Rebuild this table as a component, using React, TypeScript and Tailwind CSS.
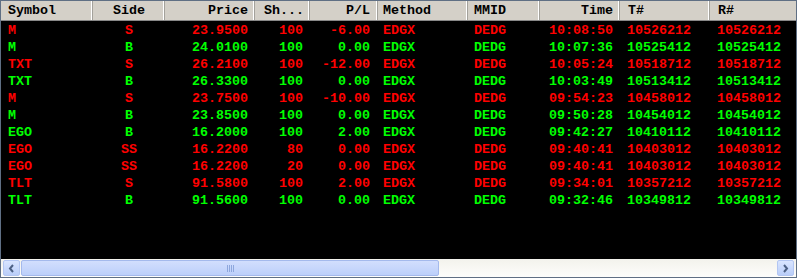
const RED = "text-[#ff0000]";
const GREEN = "text-[#00ff00]";

type Trade = {
  sym: string;
  side: string;
  price: string;
  sh: string;
  pl: string;
  time: string;
  t: string;
  buy: boolean;
};

const trades: Trade[] = [
  { sym: "M", side: "S", price: "23.9500", sh: "100", pl: "-6.00", time: "10:08:50", t: "10526212", buy: false },
  { sym: "M", side: "B", price: "24.0100", sh: "100", pl: "0.00", time: "10:07:36", t: "10525412", buy: true },
  { sym: "TXT", side: "S", price: "26.2100", sh: "100", pl: "-12.00", time: "10:05:24", t: "10518712", buy: false },
  { sym: "TXT", side: "B", price: "26.3300", sh: "100", pl: "0.00", time: "10:03:49", t: "10513412", buy: true },
  { sym: "M", side: "S", price: "23.7500", sh: "100", pl: "-10.00", time: "09:54:23", t: "10458012", buy: false },
  { sym: "M", side: "B", price: "23.8500", sh: "100", pl: "0.00", time: "09:50:28", t: "10454012", buy: true },
  { sym: "EGO", side: "B", price: "16.2000", sh: "100", pl: "2.00", time: "09:42:27", t: "10410112", buy: true },
  { sym: "EGO", side: "SS", price: "16.2200", sh: "80", pl: "0.00", time: "09:40:41", t: "10403012", buy: false },
  { sym: "EGO", side: "SS", price: "16.2200", sh: "20", pl: "0.00", time: "09:40:41", t: "10403012", buy: false },
  { sym: "TLT", side: "S", price: "91.5800", sh: "100", pl: "2.00", time: "09:34:01", t: "10357212", buy: false },
  { sym: "TLT", side: "B", price: "91.5600", sh: "100", pl: "0.00", time: "09:32:46", t: "10349812", buy: true },
];

const cols = "grid grid-cols-[92px_72px_90px_55px_68px_90px_72px_80px_90px_1fr]";
const hcell = "h-full flex items-center shadow-[inset_-1px_0_#a3a19b,inset_-2px_0_#ffffff]";

const Header = () => (
  <div className={`${cols} h-[20px] bg-[#d4d0c8] text-black border-b border-[#888]`}>
    <div className={`${hcell} pl-[7px]`}>Symbol</div>
    <div className={`${hcell} justify-center`}>Side</div>
    <div className={`${hcell} justify-end pr-[7px]`}>Price</div>
    <div className={`${hcell} pl-[9px]`}>Sh...</div>
    <div className={`${hcell} justify-end pr-[8px]`}>P/L</div>
    <div className={`${hcell} pl-[5px]`}>Method</div>
    <div className={`${hcell} pl-[6px]`}>MMID</div>
    <div className={`${hcell} justify-end pr-[7px]`}>Time</div>
    <div className={`${hcell} pl-[8px]`}>T#</div>
    <div className="h-full flex items-center pl-[8px]">R#</div>
  </div>
);

const Row = (tr: Trade) => (
  <div className={`${cols} h-[17px] items-center ${tr.buy ? GREEN : RED}`}>
    <div className="pl-[7px]">{tr.sym}</div>
    <div className="text-center">{tr.side}</div>
    <div className="text-right pr-[7px]">{tr.price}</div>
    <div className="text-right pr-[7px]">{tr.sh}</div>
    <div className="text-right pr-[8px]">{tr.pl}</div>
    <div className="pl-[5px]">EDGX</div>
    <div className="pl-[6px]">DEDG</div>
    <div className="text-right pr-[7px]">{tr.time}</div>
    <div className="pl-[7px]">{tr.t}</div>
    <div className="pl-[7px]">{tr.t}</div>
  </div>
);

const ScrollBar = () => (
  <div className="h-[18px] bg-gradient-to-b from-[#f3f2ec] to-[#fdfdfb] flex items-center px-[2px] gap-[1px]">
    <div className="w-[17px] h-[16px] rounded-[2px] border border-[#b3c6f2] bg-gradient-to-b from-[#d9e5ff] to-[#b9cdf8] flex items-center justify-center text-[#4d6185]">
      <svg width="7" height="9" viewBox="0 0 7 9">
        <path d="M5 1 L2 4.5 L5 8" stroke="#4d6185" strokeWidth="2" fill="none" />
      </svg>
    </div>
    <div className="w-[418px] h-[16px] rounded-[2px] border border-[#a4b9ec] bg-gradient-to-b from-[#d2defd] to-[#bccffa] flex items-center justify-center gap-[1px]">
      {[0, 1, 2, 3].map((i) => (
        <div key={i} className="w-[1px] h-[7px] bg-[#8ea7dd]" />
      ))}
    </div>
    <div className="flex-1" />
    <div className="w-[17px] h-[16px] rounded-[2px] border border-[#b3c6f2] bg-gradient-to-b from-[#d9e5ff] to-[#b9cdf8] flex items-center justify-center">
      <svg width="7" height="9" viewBox="0 0 7 9">
        <path d="M2 1 L5 4.5 L2 8" stroke="#4d6185" strokeWidth="2" fill="none" />
      </svg>
    </div>
  </div>
);

export default function App() {
  return (
    <div className="w-[797px] h-[278px] border border-[#5f6f84] bg-black flex flex-col font-['Liberation_Mono',monospace] font-bold text-[13.33px] leading-none overflow-hidden">
      <Header />
      <div className="flex-1 bg-black pt-[1px]">
        {trades.map((tr, i) => (
          <Row key={i} {...tr} />
        ))}
      </div>
      <ScrollBar />
    </div>
  );
}
